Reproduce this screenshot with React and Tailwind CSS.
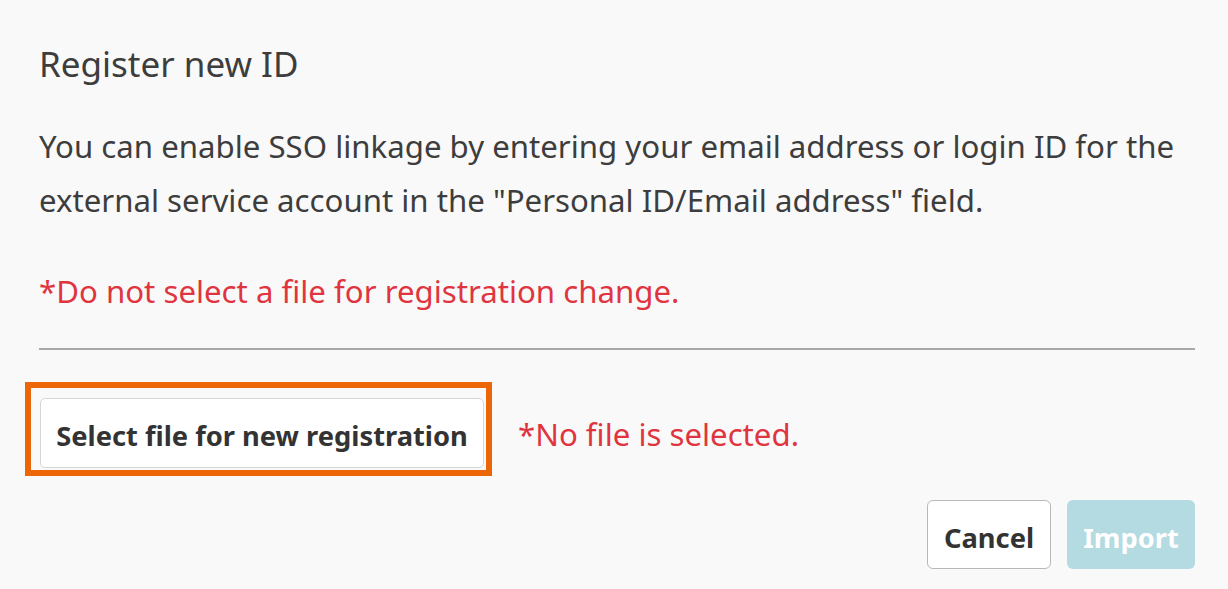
import React from 'react';

const font = { fontFamily: '"Noto Sans", "Open Sans", sans-serif' };

export default function App() {
  return (
    <div className="w-[1228px] h-[589px] bg-[#f9f9f9] text-[#3a3a3a] overflow-hidden" style={font}>
      <div className="pl-[39px] pr-[33px] pt-[42px]">
        <h2 className="text-[35px] leading-[44px] font-normal text-[#3d3d3d]">Register new ID</h2>
        <p className="mt-[33px] text-[31.2px] leading-[54px] text-[#3d3d3d]">
          You can enable SSO linkage by entering your email address or login ID for the external service account in the "Personal ID/Email address" field.
        </p>
        <p className="mt-[42px] text-[31.2px] leading-[44px] text-[#e0353f]">
          *Do not select a file for registration change.
        </p>
        <div className="mt-[35px] h-[2px] bg-[#a8a8a8]" />
      </div>

      <div className="mt-[32px] pl-[25px] flex items-center">
        <div className="border-[6px] border-[#ec6608] pl-[9px] pt-[10px] pr-[2px] pb-[2px]">
          <button className="w-[444px] h-[70px] pt-[7px] bg-white border border-[#d6d6d6] rounded-[5px] text-[27.3px] font-bold text-[#333]">
            Select file for new registration
          </button>
        </div>
        <span className="ml-[26px] mt-[10px] text-[31.2px] text-[#e0353f]">*No file is selected.</span>
      </div>

      <div className="mt-[24px] pr-[33px] flex justify-end gap-[16px]">
        <button className="w-[124px] h-[69px] pt-[7px] bg-white border border-[#b8b8b8] rounded-[6px] text-[27.3px] font-bold text-[#333]">
          Cancel
        </button>
        <button className="w-[128px] h-[69px] pt-[7px] bg-[#b4dae2] rounded-[6px] text-[27.3px] font-bold text-white">
          Import
        </button>
      </div>
    </div>
  );
}
